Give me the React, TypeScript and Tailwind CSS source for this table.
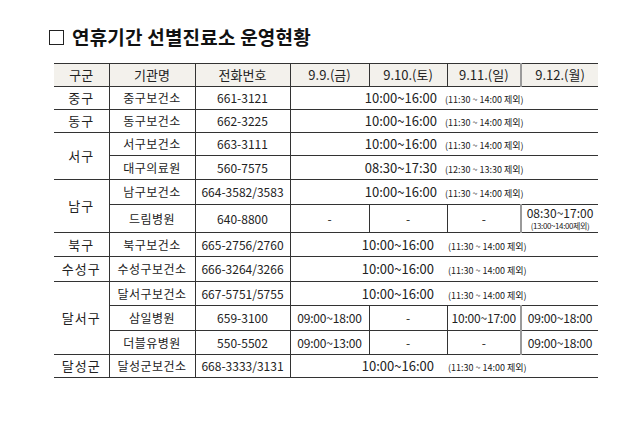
const font = { fontFamily: '"Noto Sans CJK KR", "Noto Sans", sans-serif' };

type Row = {
  gu?: { label: string; span: number };
  name: string;
  phone: string;
  h: string;
  hours: React.ReactNode;
};

function Merged({ time, note, wide }: { time: string; note: string; wide?: boolean }) {
  return (
    <td colSpan={4} className="text-center">
      <span className="text-[13px]">{time}</span>
      <span className={wide ? "ml-[14px] text-[9px]" : "ml-[8px] text-[9px]"}>{note}</span>
    </td>
  );
}

const cellL = "border-r border-[#333]";
const sepGray = "border-r-2 border-[#9a9a9a]";
const hr = "text-center text-[12px] tracking-[-0.2px]";

export default function App() {
  const rows: Row[] = [
    { gu: { label: "중구", span: 1 }, name: "중구보건소", phone: "661-3121", h: "h-[23px]", hours: <Merged time="10:00~16:00" note="(11:30 ~ 14:00 제외)" /> },
    { gu: { label: "동구", span: 1 }, name: "동구보건소", phone: "662-3225", h: "h-[23px]", hours: <Merged time="10:00~16:00" note="(11:30 ~ 14:00 제외)" /> },
    { gu: { label: "서구", span: 2 }, name: "서구보건소", phone: "663-3111", h: "h-[23px]", hours: <Merged time="10:00~16:00" note="(11:30 ~ 14:00 제외)" /> },
    { name: "대구의료원", phone: "560-7575", h: "h-[24px]", hours: <Merged time="08:30~17:30" note="(12:30 ~ 13:30 제외)" /> },
    { gu: { label: "남구", span: 2 }, name: "남구보건소", phone: "664-3582/3583", h: "h-[25px]", hours: <Merged time="10:00~16:00" note="(11:30 ~ 14:00 제외)" /> },
    {
      name: "드림병원",
      phone: "640-8800",
      h: "h-[28px]",
      hours: (
        <>
          <td className={`${cellL} ${hr}`}>-</td>
          <td className={`${cellL} ${hr}`}>-</td>
          <td className={`${sepGray} ${hr}`}>-</td>
          <td className="text-center">
            <div className="text-[12px] leading-[14px]">08:30~17:00</div>
            <div className="text-[8px] leading-[12px] tracking-[-0.4px]">(13:00~14:00제외)</div>
          </td>
        </>
      ),
    },
    { gu: { label: "북구", span: 1 }, name: "북구보건소", phone: "665-2756/2760", h: "h-[24px]", hours: <Merged wide time="10:00~16:00" note="(11:30 ~ 14:00 제외)" /> },
    { gu: { label: "수성구", span: 1 }, name: "수성구보건소", phone: "666-3264/3266", h: "h-[25px]", hours: <Merged wide time="10:00~16:00" note="(11:30 ~ 14:00 제외)" /> },
    { gu: { label: "달서구", span: 3 }, name: "달서구보건소", phone: "667-5751/5755", h: "h-[24px]", hours: <Merged wide time="10:00~16:00" note="(11:30 ~ 14:00 제외)" /> },
    {
      name: "삼일병원",
      phone: "659-3100",
      h: "h-[25px]",
      hours: (
        <>
          <td className={`${cellL} ${hr}`}>09:00~18:00</td>
          <td className={`${cellL} ${hr}`}>-</td>
          <td className={`${sepGray} ${hr}`}>10:00~17:00</td>
          <td className={hr}>09:00~18:00</td>
        </>
      ),
    },
    {
      name: "더블유병원",
      phone: "550-5502",
      h: "h-[24px]",
      hours: (
        <>
          <td className={`${cellL} ${hr}`}>09:00~13:00</td>
          <td className={`${cellL} ${hr}`}>-</td>
          <td className={`${sepGray} ${hr}`}>-</td>
          <td className={hr}>09:00~18:00</td>
        </>
      ),
    },
    { gu: { label: "달성군", span: 1 }, name: "달성군보건소", phone: "668-3333/3131", h: "h-[23px]", hours: <Merged wide time="10:00~16:00" note="(11:30 ~ 14:00 제외)" /> },
  ];

  return (
    <div className="w-[640px] h-[431px] bg-white text-[#222]" style={font}>
      <div className="pt-[25px] pl-[49px] flex items-center gap-[8px]">
        <span className="inline-block w-[15px] h-[15px] border-[1.5px] border-[#222]" />
        <h1 className="text-[19px] leading-[24px] font-bold tracking-[0.2px] text-[#111]">연휴기간 선별진료소 운영현황</h1>
      </div>
      <table className="ml-[54px] mt-[14px] w-[544px] table-fixed border-collapse border-y border-[#333] leading-[16px]">
        <colgroup>
          <col className="w-[55px]" />
          <col className="w-[86px]" />
          <col className="w-[95px]" />
          <col className="w-[79px]" />
          <col className="w-[78px]" />
          <col className="w-[74px]" />
          <col className="w-[77px]" />
        </colgroup>
        <thead>
          <tr className="h-[23px] bg-[#f3f1ec] text-[13px] border-b border-[#333]">
            <th className={`${cellL} font-normal`}>구군</th>
            <th className={`${cellL} font-normal`}>기관명</th>
            <th className={`${cellL} font-normal`}>전화번호</th>
            <th className={`${cellL} font-normal`}>9.9.(금)</th>
            <th className={`${cellL} font-normal`}>9.10.(토)</th>
            <th className={`${sepGray} font-normal`}>9.11.(일)</th>
            <th className="font-normal">9.12.(월)</th>
          </tr>
        </thead>
        <tbody>
          {rows.map((r, i) => (
            <tr key={i} className={`${r.h} border-b border-[#333]`}>
              {r.gu && (
                <td rowSpan={r.gu.span} className={`${cellL} border-b border-[#333] text-center text-[13px] tracking-[1px]`}>
                  {r.gu.label}
                </td>
              )}
              <td className={`${cellL} text-center text-[12px] tracking-[0.5px]`}>{r.name}</td>
              <td className={`${cellL} text-center text-[12px]`}>{r.phone}</td>
              {r.hours}
            </tr>
          ))}
        </tbody>
      </table>
    </div>
  );
}
